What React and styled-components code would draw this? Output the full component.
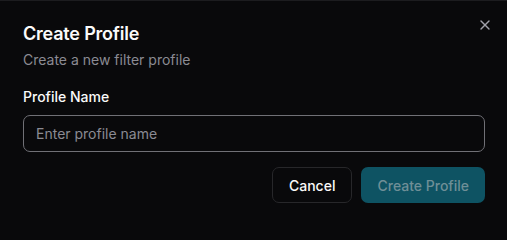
import React, { useState } from "react";
import styled, { createGlobalStyle } from "styled-components";
import { X } from "lucide-react";

const GlobalStyle = createGlobalStyle`
  html, body {
    margin: 0;
    padding: 0;
    background: #09090b;
  }
  * {
    box-sizing: border-box;
  }
`;

const Dialog = styled.div`
  position: relative;
  width: 507px;
  height: 224px;
  overflow: hidden;
  background: #09090b;
  border-top: 1px solid #1c1c1f;
  padding: 19px 22px 0 23px;
  display: flex;
  flex-direction: column;
  font-family: Inter, "Liberation Sans", sans-serif;
  color: #fafafa;
`;

const CloseButton = styled.button`
  position: absolute;
  top: 16px;
  right: 14px;
  background: none;
  border: none;
  padding: 0;
  display: flex;
  color: #a1a1aa;
  cursor: pointer;
`;

const Title = styled.h2`
  margin: 0;
  font-size: 18px;
  line-height: 28px;
  font-weight: 600;
  letter-spacing: -0.2px;
`;

const Subtitle = styled.p`
  margin: 2px 0 0;
  font-size: 14px;
  line-height: 20px;
  color: #8b8b93;
`;

const Field = styled.div`
  display: flex;
  flex-direction: column;
  gap: 8px;
  margin-top: 17px;
`;

const Label = styled.label`
  font-size: 14px;
  line-height: 20px;
  font-weight: 500;
`;

const Input = styled.input`
  height: 37px;
  padding: 0 12px;
  border: 1px solid #707076;
  border-radius: 7px;
  background: #09090b;
  color: #fafafa;
  font-family: inherit;
  font-size: 14px;
  outline: none;
  caret-color: #fafafa;

  &::placeholder {
    color: #8b8b93;
  }
`;

const Actions = styled.div`
  display: flex;
  justify-content: flex-end;
  gap: 9px;
  margin-top: 15px;
`;

const Button = styled.button`
  height: 36px;
  padding: 0 16px;
  border-radius: 7px;
  font-family: inherit;
  font-size: 14px;
  font-weight: 500;
  cursor: pointer;
  border: ${(p) => (p.$primary ? "none" : "1px solid #27272a")};
  background: ${(p) => (p.$primary ? "#0e5363" : "#09090b")};
  color: ${(p) => (p.$primary ? "#6f8f97" : "#fafafa")};

  &:disabled {
    cursor: not-allowed;
  }
`;

export default function App() {
  const [name, setName] = useState("");

  return (
    <>
      <GlobalStyle />
      <Dialog>
        <CloseButton aria-label="Close">
          <X size={16} strokeWidth={2} />
        </CloseButton>
        <Title>Create Profile</Title>
        <Subtitle>Create a new filter profile</Subtitle>
        <Field>
          <Label htmlFor="profile-name">Profile Name</Label>
          <Input
            id="profile-name"
            autoFocus
            placeholder="Enter profile name"
            value={name}
            onChange={(e) => setName(e.target.value)}
          />
        </Field>
        <Actions>
          <Button>Cancel</Button>
          <Button $primary disabled={!name.trim()}>
            Create Profile
          </Button>
        </Actions>
      </Dialog>
    </>
  );
}
